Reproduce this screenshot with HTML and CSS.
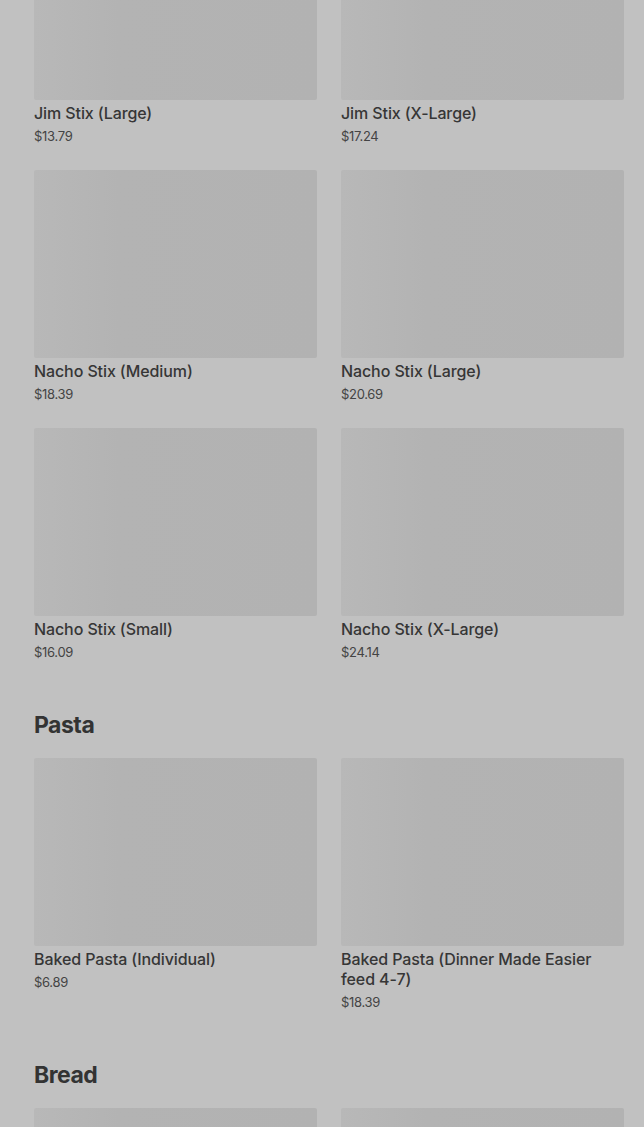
FILE: index.html
```html
<!DOCTYPE html>
<html>
	<head>
		<meta charset="utf-8" />
		<title>Menu</title>
		<link rel="stylesheet" href="styles.css">
	</head>
	<body>
		<div class="menu">
			<section class="section section-first">
				<div class="grid">
					<div class="card">
						<div class="thumb"></div>
						<div class="name">Jim Stix (Large)</div>
						<div class="price">$13.79</div>
					</div>
					<div class="card">
						<div class="thumb"></div>
						<div class="name">Jim Stix (X-Large)</div>
						<div class="price">$17.24</div>
					</div>
					<div class="card">
						<div class="thumb"></div>
						<div class="name">Nacho Stix (Medium)</div>
						<div class="price">$18.39</div>
					</div>
					<div class="card">
						<div class="thumb"></div>
						<div class="name">Nacho Stix (Large)</div>
						<div class="price">$20.69</div>
					</div>
					<div class="card">
						<div class="thumb"></div>
						<div class="name">Nacho Stix (Small)</div>
						<div class="price">$16.09</div>
					</div>
					<div class="card">
						<div class="thumb"></div>
						<div class="name">Nacho Stix (X-Large)</div>
						<div class="price">$24.14</div>
					</div>
				</div>
			</section>

			<section class="section">
				<h2>Pasta</h2>
				<div class="grid">
					<div class="card">
						<div class="thumb"></div>
						<div class="name">Baked Pasta (Individual)</div>
						<div class="price">$6.89</div>
					</div>
					<div class="card">
						<div class="thumb"></div>
						<div class="name">Baked Pasta (Dinner Made Easier feed 4-7)</div>
						<div class="price">$18.39</div>
					</div>
				</div>
			</section>

			<section class="section">
				<h2>Bread</h2>
				<div class="grid">
					<div class="card">
						<div class="thumb"></div>
					</div>
					<div class="card">
						<div class="thumb"></div>
					</div>
				</div>
			</section>
		</div>
	</body>
</html>
```

FILE: styles.css
```css
body {
	margin: 0;
	font-family: Inter, "Liberation Sans", sans-serif;
	background-color: #c1c1c1;
	color: #303030;
	overflow: hidden;
}

.menu {
	padding: 0 20px 0 34px;
}

.section {
	margin-top: 45px;
}

.section-first {
	margin-top: -88px;
}

.section h2 {
	margin: 0 0 15px;
	font-size: 23px;
	line-height: 36px;
	font-weight: 700;
	letter-spacing: -0.5px;
	color: #333;
}

.grid {
	display: grid;
	grid-template-columns: 283px 283px;
	column-gap: 24px;
	row-gap: 24px;
}

.thumb {
	height: 188px;
	background: linear-gradient(90deg, #b8b8b8 0%, #b3b3b3 30%, #b2b2b2 100%);
	border-radius: 2px;
}

.name {
	margin-top: 3px;
	font-size: 16px;
	line-height: 20px;
	font-weight: 500;
	letter-spacing: -0.1px;
	color: #363636;
}

.price {
	margin-top: 3px;
	font-size: 13px;
	line-height: 20px;
	color: #444;
	letter-spacing: -0.3px;
}
```
